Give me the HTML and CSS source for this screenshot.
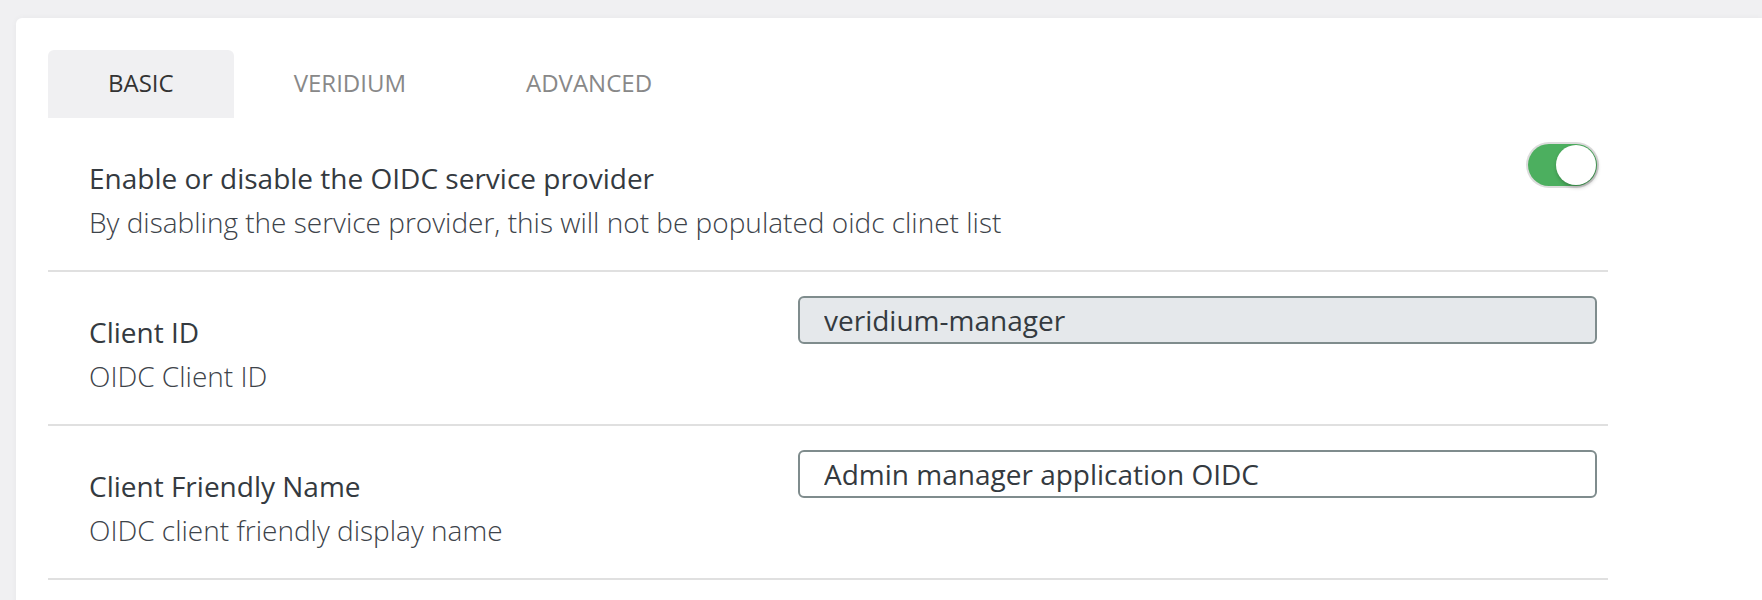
FILE: index.html
```html
<!DOCTYPE html>
<html>
<head>
    <title>OIDC Client Settings</title>
    <link rel="stylesheet" href="styles.css">
</head>
<body>
    <div class="card">
        <div class="tabs">
            <div class="tab active">BASIC</div>
            <div class="tab">VERIDIUM</div>
            <div class="tab">ADVANCED</div>
        </div>

        <div class="row">
            <div class="info">
                <div class="title">Enable or disable the OIDC service provider</div>
                <div class="desc">By disabling the service provider, this will not be populated oidc clinet list</div>
            </div>
            <div class="control toggle-wrap">
                <label class="toggle">
                    <input type="checkbox" checked>
                    <span class="slider"></span>
                </label>
            </div>
        </div>

        <div class="row">
            <div class="info">
                <div class="title">Client ID</div>
                <div class="desc">OIDC Client ID</div>
            </div>
            <div class="control">
                <input type="text" class="field" value="veridium-manager" disabled>
            </div>
        </div>

        <div class="row">
            <div class="info">
                <div class="title">Client Friendly Name</div>
                <div class="desc">OIDC client friendly display name</div>
            </div>
            <div class="control">
                <input type="text" class="field" value="Admin manager application OIDC">
            </div>
        </div>
    </div>
</body>
</html>
```

FILE: styles.css
```css
body {
    margin: 0;
    background: #f0f0f2;
    font-family: "Open Sans", Arial, sans-serif;
    color: #343a40;
}
.card {
    margin: 18px 0 0 16px;
    padding: 32px 0 0 32px;
    background: #fff;
    border-radius: 6px 0 0 0;
    box-shadow: 0 0 6px rgba(0, 0, 0, 0.04);
    min-height: 600px;
}
.tabs {
    display: flex;
}
.tab {
    padding: 0 60px;
    height: 68px;
    line-height: 66px;
    font-size: 24px;
    color: #888;
    border-radius: 6px 6px 0 0;
}
.tab.active {
    background: #f0f0f2;
    color: #333;
}
.row {
    display: flex;
    width: 1560px;
    border-bottom: 2px solid #e0e0e0;
}
.info {
    flex: 1;
    padding: 42px 0 30px 41px;
    white-space: nowrap;
}
.title {
    font-size: 28px;
    line-height: 36px;
    color: #343a40;
}
.desc {
    margin-top: 8px;
    font-size: 28px;
    line-height: 36px;
    font-weight: 300;
    color: #3d434a;
}
.control {
    width: 799px;
    padding: 24px 11px 0 0;
}
.field {
    box-sizing: border-box;
    width: 100%;
    height: 48px;
    padding: 0 24px;
    border: 2px solid #7f8c8d;
    border-radius: 6px;
    font-family: inherit;
    font-size: 28px;
    color: #343a40;
    background: #fff;
}
.field:disabled {
    background: #e5e8eb;
    color: #343a40;
}
.toggle-wrap {
    display: flex;
    justify-content: flex-end;
    padding-top: 26px;
}
.toggle {
    position: relative;
    display: inline-block;
    width: 69px;
    height: 42px;
}
.toggle input {
    display: none;
}
.slider {
    position: absolute;
    inset: 0;
    background: #ddd;
    border-radius: 21px;
}
.toggle input:checked + .slider {
    background: #4caf5f;
    box-shadow: 0 0 0 2px #dcdcdc;
}
.slider::before {
    content: "";
    position: absolute;
    top: 1px;
    left: 1px;
    width: 40px;
    height: 40px;
    background: #fff;
    border-radius: 50%;
    box-shadow: 1px 2px 4px rgba(0, 0, 0, 0.3);
}
.toggle input:checked + .slider::before {
    left: 28px;
}
```
